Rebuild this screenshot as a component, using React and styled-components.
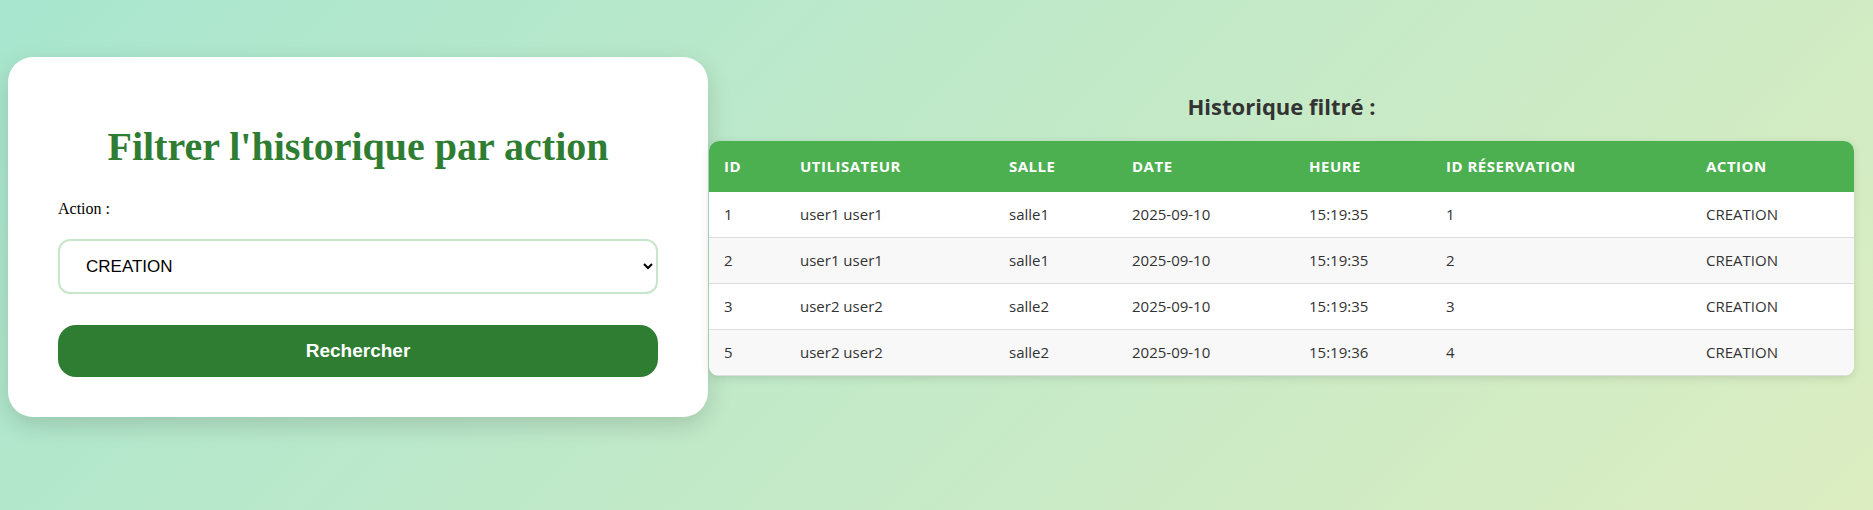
import React, { useState } from "react";
import styled, { createGlobalStyle } from "styled-components";

const GlobalStyle = createGlobalStyle`
    html, body {
        margin: 0;
        padding: 0;
    }
    body {
        min-height: 100vh;
        background: linear-gradient(135deg, #a8e6cf 0%, #dcedc1 100%);
        font-family: "Liberation Serif", "Times New Roman", serif;
    }
`;

const Page = styled.div`
    display: flex;
    align-items: center;
    gap: 1px;
    padding: 57px 19px 0 8px;
`;

const Card = styled.form`
    flex: 0 0 700px;
    box-sizing: border-box;
    padding: 40px 50px;
    background-color: #fff;
    border-radius: 25px;
    box-shadow: 0 8px 24px rgba(0, 0, 0, 0.15);
`;

const Title = styled.h1`
    margin: 27px 0 30px;
    font-size: 40px;
    line-height: 46px;
    font-weight: bold;
    color: #2e7d32;
    text-align: center;
`;

const Label = styled.label`
    display: block;
    font-size: 16px;
    line-height: 18px;
    color: #000;
    margin-bottom: 21px;
`;

const Select = styled.select`
    display: block;
    width: 100%;
    box-sizing: border-box;
    padding: 15px 8px 15px 22px;
    font-family: "Liberation Sans", Arial, sans-serif;
    font-size: 17px;
    color: #000;
    background-color: #fff;
    border: 2px solid #c8e6c9;
    border-radius: 12px;
    outline: none;
`;

const Button = styled.button`
    display: block;
    width: 100%;
    margin-top: 31px;
    padding: 15px;
    border: none;
    border-radius: 18px;
    background-color: #2e7d32;
    color: #fff;
    font-family: "Liberation Sans", Arial, sans-serif;
    font-size: 19px;
    line-height: 22px;
    font-weight: bold;
    cursor: pointer;
`;

const Results = styled.section`
    flex: 1;
    min-width: 0;
    padding-bottom: 8px;
    font-family: "Open Sans", "Noto Sans", sans-serif;
    color: #333;
`;

const Heading = styled.h3`
    margin: 0 0 20px;
    font-size: 22px;
    line-height: 30px;
    font-weight: 700;
    text-align: center;
    color: #333;
`;

const TableWrap = styled.div`
    border-radius: 10px;
    overflow: hidden;
    background-color: #fff;
    box-shadow: 0 2px 8px rgba(0, 0, 0, 0.12);
`;

const Table = styled.table`
    width: 100%;
    border-collapse: collapse;
    table-layout: fixed;
`;

const Th = styled.th`
    box-sizing: border-box;
    width: ${(props) => props.$w}px;
    padding: 15px;
    background-color: #4caf50;
    color: #fff;
    font-size: 15px;
    line-height: 21px;
    font-weight: 700;
    text-transform: uppercase;
    letter-spacing: 0.5px;
    text-align: left;
`;

const Row = styled.tr`
    background-color: #fff;
    &:nth-child(even) {
        background-color: #f8f8f8;
    }
`;

const Td = styled.td`
    padding: 12px 15px;
    font-size: 15px;
    line-height: 21px;
    color: #333;
    border-bottom: 1px solid #ddd;
`;

const COLUMNS = [
    { label: "ID", width: 76 },
    { label: "Utilisateur", width: 209 },
    { label: "Salle", width: 123 },
    { label: "Date", width: 177 },
    { label: "Heure", width: 137 },
    { label: "ID Réservation", width: 260 },
    { label: "Action", width: 163 },
];

const HISTORY = [
    { id: 1, user: "user1 user1", room: "salle1", date: "2025-09-10", time: "15:19:35", resa: 1, action: "CREATION" },
    { id: 2, user: "user1 user1", room: "salle1", date: "2025-09-10", time: "15:19:35", resa: 2, action: "CREATION" },
    { id: 3, user: "user2 user2", room: "salle2", date: "2025-09-10", time: "15:19:35", resa: 3, action: "CREATION" },
    { id: 5, user: "user2 user2", room: "salle2", date: "2025-09-10", time: "15:19:36", resa: 4, action: "CREATION" },
];

function App() {
    const [action, setAction] = useState("CREATION");

    return (
        <>
            <GlobalStyle />
            <Page>
                <Card onSubmit={(e) => e.preventDefault()}>
                    <Title>Filtrer l'historique par action</Title>
                    <Label htmlFor="action">Action :</Label>
                    <Select id="action" value={action} onChange={(e) => setAction(e.target.value)}>
                        <option value="CREATION">CREATION</option>
                        <option value="MODIFICATION">MODIFICATION</option>
                        <option value="SUPPRESSION">SUPPRESSION</option>
                    </Select>
                    <Button type="submit">Rechercher</Button>
                </Card>
                <Results>
                    <Heading>Historique filtré :</Heading>
                    <TableWrap>
                        <Table>
                            <thead>
                                <tr>
                                    {COLUMNS.map((col) => (
                                        <Th key={col.label} $w={col.width}>{col.label}</Th>
                                    ))}
                                </tr>
                            </thead>
                            <tbody>
                                {HISTORY.map((h) => (
                                    <Row key={h.id}>
                                        <Td>{h.id}</Td>
                                        <Td>{h.user}</Td>
                                        <Td>{h.room}</Td>
                                        <Td>{h.date}</Td>
                                        <Td>{h.time}</Td>
                                        <Td>{h.resa}</Td>
                                        <Td>{h.action}</Td>
                                    </Row>
                                ))}
                            </tbody>
                        </Table>
                    </TableWrap>
                </Results>
            </Page>
        </>
    );
}

export default App;
